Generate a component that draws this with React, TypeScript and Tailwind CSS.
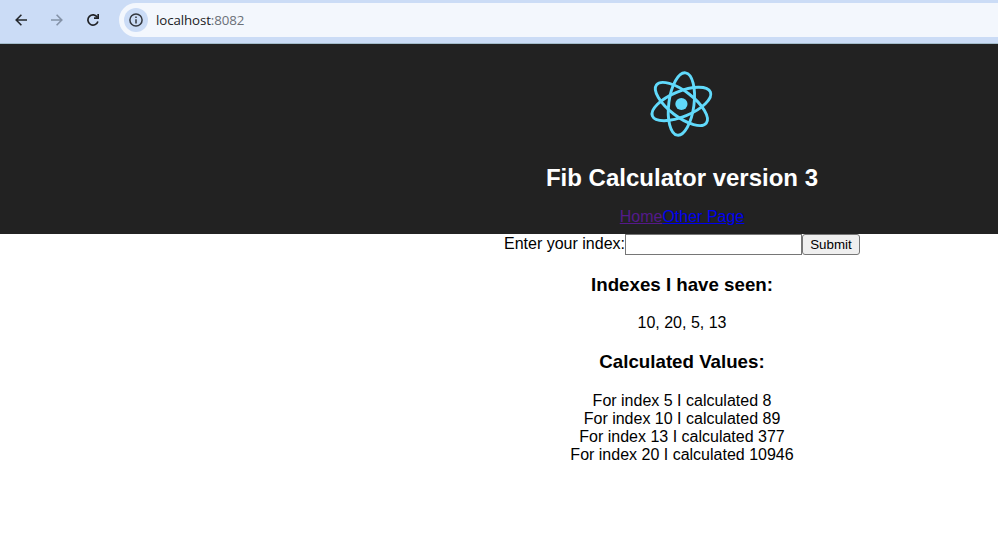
import React from "react";

const results: { index: number; value: number }[] = [
  { index: 5, value: 8 },
  { index: 10, value: 89 },
  { index: 13, value: 377 },
  { index: 20, value: 10946 },
];

function BrowserBar() {
  return (
    <div className="flex h-[44px] items-start border-b border-[#a3bccb] bg-[#cbdcf6]">
      <div className="flex h-10 w-[119px] shrink-0 items-center pl-[15px]">
        <svg className="h-3 w-3" viewBox="0 0 12 12" fill="none" stroke="#25282d" strokeWidth="1.6">
          <path d="M12 6H1.3M6.4 .8L1.2 6l5.2 5.2" />
        </svg>
        <svg className="ml-6 h-3 w-3" viewBox="0 0 12 12" fill="none" stroke="#8492a7" strokeWidth="1.6">
          <path d="M0 6h10.7M5.6 .8L10.8 6l-5.2 5.2" />
        </svg>
        <svg className="ml-6 h-3 w-3" viewBox="0 0 12 12" fill="none" stroke="#202226" strokeWidth="1.7">
          <path d="M10.9 7.5A5.1 5.1 0 1 1 10.4 3.4" />
          <path d="M11.2 0v4.2H7" />
        </svg>
      </div>
      <div className="mt-[3px] flex h-[34px] flex-1 items-center rounded-l-full bg-[#f3f7fd] pl-[5px]">
        <span className="flex h-6 w-6 items-center justify-center rounded-full bg-[#cbdcf6]">
          <svg className="h-[14px] w-[14px]" viewBox="0 0 14 14" fill="none" stroke="#34383f">
            <circle cx="7" cy="7" r="6.1" strokeWidth="1.5" />
            <path d="M7 6.2v4.2M7 3.6v1.5" strokeWidth="1.5" />
          </svg>
        </span>
        <span className="ml-2 font-['Open_Sans',sans-serif] text-[13.3px] leading-5 tracking-[-0.1px] text-[#202124]">
          localhost<span className="text-[#6b7078]">:8082</span>
        </span>
      </div>
    </div>
  );
}

function ReactLogo() {
  return (
    <svg className="h-20 w-20" viewBox="-40 -40 80 80" fill="none" stroke="#61dafb" strokeWidth="2.9">
      <g transform="translate(-0.6 0)">
        <ellipse rx="31.4" ry="12.6" transform="rotate(-82.5)" />
        <ellipse rx="31.4" ry="12.6" transform="rotate(-22.5)" />
        <ellipse rx="31.4" ry="12.6" transform="rotate(37.5)" />
        <circle r="6.1" fill="#61dafb" stroke="none" />
      </g>
    </svg>
  );
}

export default function App() {
  return (
    <div className="h-[535px] overflow-hidden bg-white">
      <BrowserBar />
      <main className="w-[1364px] text-center font-['Liberation_Sans',Arial,sans-serif] text-base leading-[18px] text-black">
        <header className="flex h-[190px] flex-col items-center bg-[#222222] pt-5">
          <ReactLogo />
          <h1 className="mt-5 text-2xl leading-7 font-bold text-white">Fib Calculator version 3</h1>
          <nav className="mt-4 flex">
            <a href="#home" className="text-[#551a8b] underline">Home</a>
            <a href="#other" className="text-[#0000ee] underline">Other Page</a>
          </nav>
        </header>
        <form className="flex h-[21px] items-stretch justify-center">
          <label htmlFor="index" className="leading-[19px]">Enter your index:</label>
          <input id="index" className="w-[177px] border border-[#767676] bg-white" />
          <button type="button" className="w-[58px] rounded-[3px] border border-[#767676] bg-[#efefef] text-[13.333px] leading-[19px]">
            Submit
          </button>
        </form>
        <h3 className="mt-[19px] text-[18.72px] leading-[21px] font-bold">Indexes I have seen:</h3>
        <p className="mt-[19px]">10, 20, 5, 13</p>
        <h3 className="mt-[19px] text-[18.72px] leading-[21px] font-bold">Calculated Values:</h3>
        <div className="mt-5">
          {results.map(({ index, value }) => (
            <p key={index}>For index {index} I calculated {value}</p>
          ))}
        </div>
      </main>
    </div>
  );
}
